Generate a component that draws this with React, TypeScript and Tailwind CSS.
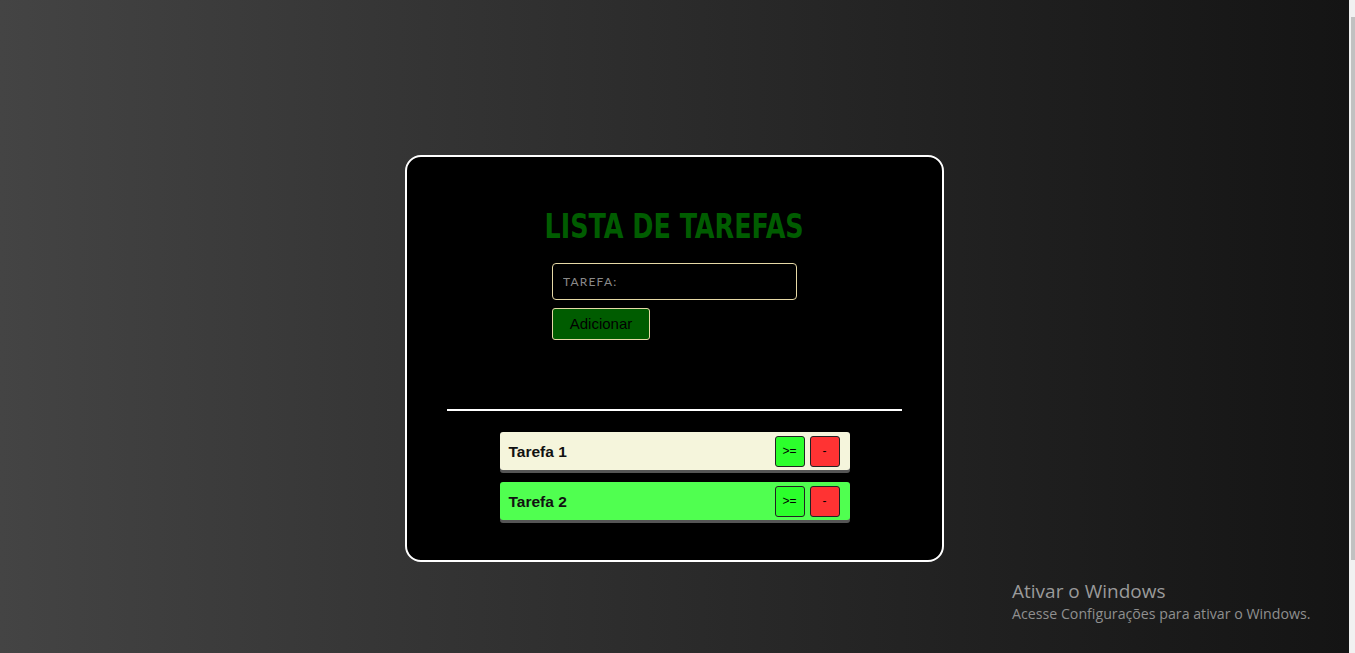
const tasks = [
  { name: 'Tarefa 1', done: false },
  { name: 'Tarefa 2', done: true },
];

const App = () => {
  return (
    <div className="flex h-[653px] w-full overflow-hidden">
      <div className="relative flex-1 bg-gradient-to-r from-[#444444] to-[#141414]">
        <div className="flex justify-center pt-[155px]">
          <div className="w-[539px] h-[407px] rounded-[16px] border-2 border-white bg-black flex flex-col items-center">
            <h1
              className="mt-[50px] text-[33px] leading-[40px] font-bold text-[#005c00] whitespace-nowrap scale-x-[0.857]"
              style={{ fontFamily: '"DejaVu Sans Condensed", "DejaVu Sans", sans-serif' }}
            >
              LISTA DE TAREFAS
            </h1>
            <div className="mt-[16px] w-[245px] flex flex-col items-start gap-[8px]">
              <input
                placeholder="TAREFA:"
                className="w-[245px] h-[37px] rounded-[4px] border border-[#e6d9a6] bg-black px-[10px] text-[12px] tracking-[1.2px] text-white placeholder:text-[#8a8a8a] outline-none"
                style={{ fontFamily: 'Lato, "Open Sans", sans-serif' }}
              />
              <button
                className="w-[98px] h-[32px] rounded-[3px] border border-[#e6d9a6] bg-[#005c00] text-[15px] text-black"
                style={{ fontFamily: '"Liberation Sans", Arial, sans-serif' }}
              >
                Adicionar
              </button>
            </div>
            <div className="mt-[69px] w-[455px] h-[2px] bg-white" />
            <ul className="mt-[21px] w-[350px] flex flex-col gap-[12px]">
              {tasks.map((t) => (
                <li
                  key={t.name}
                  className={`h-[38px] rounded-[3px] flex items-center justify-between pl-[9px] pr-[10px] shadow-[0_3px_0_#555555] ${
                    t.done ? 'bg-[#50ff50]' : 'bg-[#f5f5dc]'
                  }`}
                >
                  <span
                    className="text-[15.5px] font-bold text-[#111111] pt-[1px]"
                    style={{ fontFamily: '"Liberation Sans", Arial, sans-serif' }}
                  >
                    {t.name}
                  </span>
                  <div className="flex gap-[5px]">
                    <button
                      className="w-[30px] h-[31px] rounded-[3px] border border-[#222222] bg-[#2cff2c] text-[12px] text-black"
                      style={{ fontFamily: '"Liberation Sans", Arial, sans-serif' }}
                    >
                      &gt;=
                    </button>
                    <button
                      className="w-[30px] h-[31px] rounded-[3px] border border-[#222222] bg-[#ff3333] text-[12px] text-black"
                      style={{ fontFamily: '"Liberation Sans", Arial, sans-serif' }}
                    >
                      -
                    </button>
                  </div>
                </li>
              ))}
            </ul>
          </div>
        </div>
        <div
          className="absolute left-[1012px] top-[578px] text-[#9a9a9a]"
          style={{ fontFamily: '"Open Sans", "Noto Sans", sans-serif' }}
        >
          <div className="text-[19px] leading-[26px]">Ativar o Windows</div>
          <div className="text-[14.2px] leading-[20px] text-[#8f8f8f]">Acesse Configurações para ativar o Windows.</div>
        </div>
      </div>
      <div className="w-[6px] bg-[#f1f1f1] pt-[17px] pl-[2px]">
        <div className="w-[4px] h-[543px] bg-[#c1c1c1]" />
      </div>
    </div>
  );
};

export default App;
